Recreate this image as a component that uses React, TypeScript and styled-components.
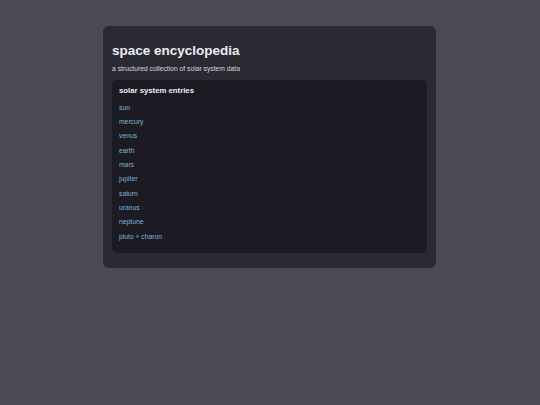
import React from "react";
import styled, { createGlobalStyle } from "styled-components";

const Global = createGlobalStyle`
  html, body {
    margin: 0;
    padding: 0;
    background: #4a4a54;
    font-family: "Liberation Sans", Arial, sans-serif;
  }
  * { box-sizing: border-box; }
`;

const Page = styled.div`
  min-height: 405px;
  padding: 26px 1px 0 0;
`;

const Card = styled.section`
  width: 333px;
  margin: 0 auto;
  background: #2a2a33;
  border-radius: 6px;
  padding: 17px 9px 15px;
`;

const Title = styled.h1`
  margin: 0;
  font-size: 13.5px;
  line-height: 16px;
  font-weight: 700;
  color: #ececf2;
`;

const Subtitle = styled.p`
  margin: 6px 0 7px;
  font-size: 6.75px;
  line-height: 8px;
  color: #d6d6de;
`;

const Entries = styled.div`
  background: #1c1b23;
  border-radius: 5px;
  padding: 6px 7px 9px;
`;

const Heading = styled.h2`
  margin: 0 0 5.6px;
  font-size: 7.75px;
  line-height: 9px;
  font-weight: 700;
  color: #ececf2;
`;

const List = styled.ul`
  list-style: none;
  margin: 0;
  padding: 0;
`;

const Item = styled.li`
  font-size: 6.75px;
  line-height: 14.33px;
`;

const Link = styled.a`
  color: #80b4d6;
  text-decoration: none;
`;

const entries = [
  "sun",
  "mercury",
  "venus",
  "earth",
  "mars",
  "jupiter",
  "saturn",
  "uranus",
  "neptune",
  "pluto + charon",
];

export default function App() {
  return (
    <>
      <Global />
      <Page>
        <Card>
          <Title>space encyclopedia</Title>
          <Subtitle>a structured collection of solar system data</Subtitle>
          <Entries>
            <Heading>solar system entries</Heading>
            <List>
              {entries.map((e) => (
                <Item key={e}>
                  <Link href="#">{e}</Link>
                </Item>
              ))}
            </List>
          </Entries>
        </Card>
      </Page>
    </>
  );
}
